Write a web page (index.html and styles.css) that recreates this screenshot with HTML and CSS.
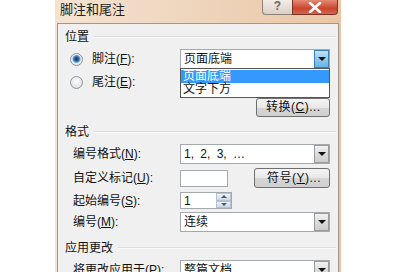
FILE: index.html
```html
<!DOCTYPE html>
<html lang="zh-CN">
<head>
    <meta charset="UTF-8">
    <title>脚注和尾注</title>
    <link rel="stylesheet" href="styles.css">
</head>
<body>
    <div class="dialog">
        <div class="title_bar">
            <span class="title_text">脚注和尾注</span>
            <div class="caption_box">
                <div class="help_btn">?</div>
                <div class="close_btn">
                    <svg width="14" height="11" viewBox="0 0 14 11">
                        <path d="M2 1 L12 10 M12 1 L2 10" stroke="#fff" stroke-width="2.6" stroke-linecap="round"/>
                    </svg>
                </div>
            </div>
        </div>
        <div class="client_box">
            <!-- 位置 -->
            <div class="group_head"><span>位置</span><span class="group_line"></span></div>
            <div class="radio_row">
                <div class="radio_label"><span class="radio checked"></span><span>脚注(<u>F</u>):</span></div>
                <div class="combo open">
                    <span class="combo_text">页面底端</span>
                    <span class="drop_btn"></span>
                    <ul class="drop_list">
                        <li class="active">页面底端</li>
                        <li>文字下方</li>
                    </ul>
                </div>
            </div>
            <div class="radio_row second">
                <div class="radio_label"><span class="radio"></span><span>尾注(<u>E</u>):</span></div>
            </div>
            <div class="btn_row">
                <div class="push_btn">转换(<u>C</u>)...</div>
            </div>
            <!-- 格式 -->
            <div class="group_head fmt"><span>格式</span><span class="group_line"></span></div>
            <div class="field_row">
                <span class="field_label">编号格式(<u>N</u>):</span>
                <div class="combo">
                    <span class="combo_text nums">1, 2, 3, …</span>
                    <span class="drop_btn"></span>
                </div>
            </div>
            <div class="field_row mark_row">
                <span class="field_label">自定义标记(<u>U</u>):</span>
                <div class="mark_box">
                    <div class="text_input"></div>
                    <div class="push_btn sym">符号(<u>Y</u>)...</div>
                </div>
            </div>
            <div class="field_row spin_row">
                <span class="field_label">起始编号(<u>S</u>):</span>
                <div class="spin_box">
                    <span class="combo_text">1</span>
                    <div class="spin_btns">
                        <span class="spin_up"></span>
                        <span class="spin_down"></span>
                    </div>
                </div>
            </div>
            <div class="field_row num_row">
                <span class="field_label">编号(<u>M</u>):</span>
                <div class="combo">
                    <span class="combo_text">连续</span>
                    <span class="drop_btn"></span>
                </div>
            </div>
            <!-- 应用更改 -->
            <div class="group_head apply"><span>应用更改</span><span class="group_line"></span></div>
            <div class="field_row">
                <span class="field_label">将更改应用于(<u>P</u>):</span>
                <div class="combo">
                    <span class="combo_text">整篇文档</span>
                    <span class="drop_btn"></span>
                </div>
            </div>
        </div>
    </div>
</body>
</html>
```

FILE: styles.css
```css
* {
    margin: 0;
    padding: 0;
    list-style: none;
    box-sizing: border-box;
}
body {
    background-color: #fff;
    font-family: "Liberation Sans", "Noto Sans CJK SC", sans-serif;
    font-size: 12px;
    color: #111;
    overflow: hidden;
}
u {
    text-decoration: underline;
    text-underline-offset: 1px;
}
/* 窗口框架 */
.dialog {
    width: 286px;
    margin-left: 55px;
    padding: 0 2px;
    background: linear-gradient(to right, #f5e3d2, #e9c6a6);
}
.title_bar {
    display: flex;
    justify-content: space-between;
    height: 23px;
}
.title_text {
    padding-left: 3px;
    padding-top: 2px;
    font-size: 13px;
    line-height: 16px;
    color: #222;
}
.caption_box {
    display: flex;
    height: 15px;
    margin-right: 1px;
}
.help_btn {
    width: 30px;
    height: 15px;
    border: 1px solid #8d7f73;
    border-top: none;
    border-right: none;
    border-radius: 0 0 0 4px;
    background: linear-gradient(#f3ece5, #d9d0c8);
    color: #666;
    font-weight: bold;
    font-size: 12px;
    line-height: 13px;
    text-align: center;
}
.close_btn {
    display: flex;
    align-items: center;
    justify-content: center;
    width: 46px;
    height: 15px;
    border: 1px solid #7c3427;
    border-top: none;
    border-radius: 0 0 4px 0;
    background: linear-gradient(#e48a74, #c9452e 60%, #d6644b);
}
/* 客户区 */
.client_box {
    height: 249px;
    padding: 6px 7px 0 7px;
    border: 1px solid #a3968a;
    border-bottom: none;
    background-color: #f0f0f0;
}
.group_head {
    display: flex;
    align-items: center;
    height: 14px;
    line-height: 14px;
    margin-right: -5px;
}
.group_line {
    flex: 1;
    margin-left: 5px;
    border-top: 1px solid #dcdcdc;
    border-bottom: 1px solid #fafafa;
}
.group_head.fmt {
    margin-top: 8px;
}
.group_head.apply {
    margin-top: 9px;
}
/* 位置 */
.radio_row {
    display: flex;
    align-items: center;
    height: 20px;
    margin-top: 5px;
    padding-left: 5px;
}
.radio_row.second {
    margin-top: 3px;
}
.radio_label {
    display: flex;
    align-items: center;
    width: 110px;
    line-height: 14px;
}
.radio {
    width: 13px;
    height: 13px;
    margin-right: 9px;
    border: 1px solid #8e959c;
    border-radius: 50%;
    background: radial-gradient(circle at 50% 40%, #fdfdfd, #d6d9dc);
}
.radio.checked {
    background: radial-gradient(circle at 50% 45%, #16375e 0, #2b5f96 2px, #6ea6d6 3.5px, #e9eef2 4.5px, #d6d9dc);
}
.btn_row {
    display: flex;
    justify-content: flex-end;
    margin-top: 6px;
    padding-right: 1px;
}
.push_btn {
    width: 74px;
    height: 19px;
    padding-left: 9px;
    border: 1px solid #707070;
    border-radius: 3px;
    background: linear-gradient(#f4f4f4, #e8e8e8 50%, #d6d6d6 51%, #cfcfcf);
    line-height: 17px;
    letter-spacing: 0.5px;
}
/* 下拉框 */
.combo {
    display: flex;
    position: relative;
    align-items: center;
    justify-content: space-between;
    width: 150px;
    height: 20px;
    border: 1px solid #a4a9ae;
    background-color: #fff;
}
.combo_text {
    padding-left: 3px;
    line-height: 14px;
}
.combo_text.nums {
    word-spacing: 3px;
}
.drop_btn {
    position: relative;
    width: 15px;
    height: 18px;
    border: 1px solid #9a9a9a;
    background: linear-gradient(#f2f2f2, #dcdcdc 50%, #cdcdcd);
}
.drop_btn::after {
    content: "";
    position: absolute;
    left: 3px;
    top: 6px;
    border-left: 4px solid transparent;
    border-right: 4px solid transparent;
    border-top: 4px solid #111;
}
.combo.open .drop_btn {
    border-color: #3c7fb1;
    background: linear-gradient(#bde3fa, #8fc9ef 50%, #6bb2e4);
}
.drop_list {
    position: absolute;
    left: -1px;
    top: 18px;
    width: 150px;
    padding: 1px 0;
    border: 1px solid #555;
    background-color: #fff;
    z-index: 10;
}
.drop_list li {
    height: 13px;
    padding-left: 2px;
    line-height: 12px;
}
.drop_list li.active {
    background-color: #3399ff;
    color: #fff;
}
/* 格式 */
.field_row {
    display: flex;
    align-items: center;
    margin-top: 5px;
    padding-left: 8px;
}
.field_label {
    width: 107px;
    line-height: 14px;
}
.mark_row {
    margin-top: 4px;
}
.mark_box {
    display: flex;
    align-items: center;
    justify-content: space-between;
    width: 150px;
}
.text_input {
    width: 48px;
    height: 17px;
    border: 1px solid #a4a9ae;
    background-color: #fff;
}
.push_btn.sym {
    width: 76px;
    height: 20px;
    padding-left: 12px;
    line-height: 18px;
}
.spin_row {
    margin-top: 4px;
}
.spin_box {
    display: flex;
    align-items: center;
    justify-content: space-between;
    width: 52px;
    height: 17px;
    border: 1px solid #a4a9ae;
    background-color: #fff;
}
.spin_btns {
    display: flex;
    flex-direction: column;
    width: 15px;
    height: 15px;
}
.spin_btns span {
    position: relative;
    flex: 1;
    border: 1px solid #b6c2cf;
    background: linear-gradient(#eef4fa, #c8d8e8);
}
.spin_up::after,
.spin_down::after {
    content: "";
    position: absolute;
    left: 4px;
    top: 1px;
    border-left: 3px solid transparent;
    border-right: 3px solid transparent;
}
.spin_up::after {
    border-bottom: 3px solid #4a5a6a;
}
.spin_down::after {
    border-top: 3px solid #4a5a6a;
}
.num_row {
    margin-top: 3px;
}
```
